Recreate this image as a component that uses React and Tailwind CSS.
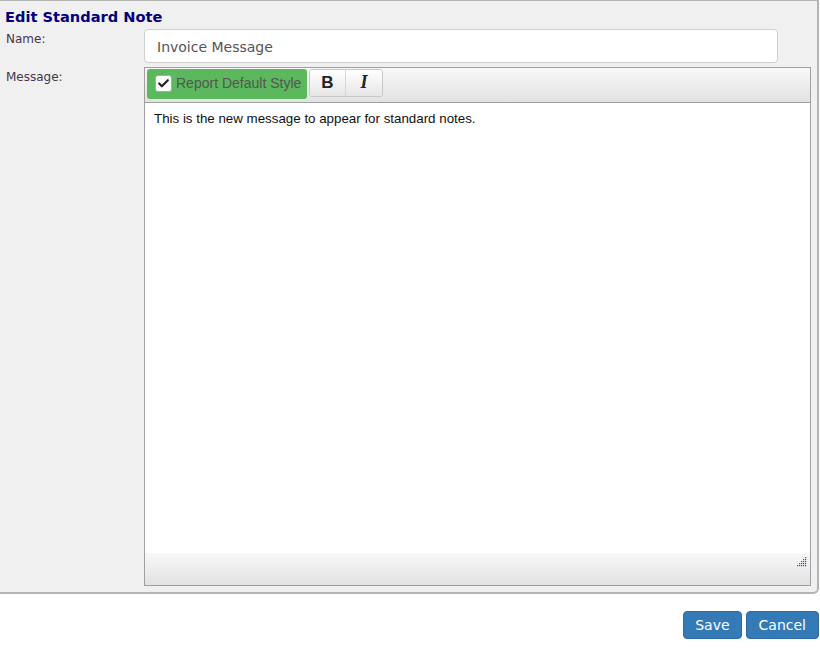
import { Check } from "lucide-react";

const verdana = "font-['DejaVu_Sans',Verdana,sans-serif]";
const arial = "font-['Liberation_Sans',Arial,sans-serif]";

function ToolbarButton({ children, className = "" }) {
  return (
    <button
      className={`h-[26px] w-[36px] flex items-center justify-center bg-gradient-to-b from-[#ffffff] to-[#e6e6e6] text-[#222] ${className}`}
    >
      {children}
    </button>
  );
}

export default function App() {
  return (
    <div className="w-[820px] h-[657px] bg-white">
      <div className="w-[819px] h-[594px] bg-[#f0f0f0] border-t border-r-2 border-b-2 border-[#b4b4b4] rounded-br-md flex flex-col">
        <h1 className={`${verdana} text-[14.6px] font-bold text-[#000080] leading-none pl-[5px] pt-[9px]`}>
          Edit Standard Note
        </h1>

        <div className="flex mt-[4px]">
          <label className={`${verdana} text-[12px] text-[#45364a] w-[144px] pl-[6px] pt-[1px]`}>
            Name:
          </label>
          <input
            defaultValue="Invoice Message"
            className={`${verdana} w-[634px] h-[34px] bg-white border border-[#cfcfcf] rounded-[4px] px-[12px] pt-[2px] text-[14px] text-[#555] outline-none`}
          />
        </div>

        <div className="flex mt-[4px]">
          <label className={`${verdana} text-[12px] text-[#45364a] w-[144px] pl-[6px] pt-[1px]`}>
            Message:
          </label>
          <div className="w-[667px] h-[519px] border border-[#a0a0a0] bg-white flex flex-col">
            <div className="h-[35px] border-b border-[#a0a0a0] bg-gradient-to-b from-[#f8f8f8] to-[#e2e2e2] flex items-start pt-[1px] pl-[2px] gap-[2px]">
              <button className={`${arial} h-[30px] w-[160px] bg-[#5cb85c] rounded-[3px] flex items-center gap-[4px] pl-[8px] text-[14px] text-[#555]`}>
                <span className="w-[17px] h-[17px] bg-white border border-[#aaa] rounded-[3px] flex items-center justify-center">
                  <Check size={13} strokeWidth={4} className="text-[#222]" />
                </span>
                Report Default Style
              </button>
              <div className="flex border border-[#c8c8c8] rounded-[3px] overflow-hidden">
                <ToolbarButton className="border-r border-[#d8d8d8]">
                  <span className={`${arial} text-[17px] font-bold`}>B</span>
                </ToolbarButton>
                <ToolbarButton>
                  <span className="font-['Liberation_Serif',serif] text-[18px] italic font-bold">I</span>
                </ToolbarButton>
              </div>
            </div>
            <div className={`${arial} flex-1 px-[9px] pt-[6px] text-[13.33px] text-[#111]`}>
              This is the new message to appear for standard notes.
            </div>
            <div className="h-[32px] bg-gradient-to-b from-[#f8f8f8] to-[#e2e2e2] flex justify-end items-start pt-[4px] pr-[3px]">
              <svg width="10" height="10" viewBox="0 0 10 10">
                {[0, 1, 2, 3, 4].map((r) =>
                  [0, 1, 2, 3, 4]
                    .filter((c) => c >= 4 - r)
                    .map((c) => (
                      <rect key={`${r}-${c}`} x={c * 2} y={r * 2} width="1.2" height="1.2" fill="#9b1fbf" />
                    ))
                )}
              </svg>
            </div>
          </div>
        </div>
      </div>

      <div className="flex justify-end gap-[4px] pr-[1px] pt-[17px]">
        <button className={`${verdana} h-[28px] px-[11px] bg-[#337ab7] border border-[#2e6da4] rounded-[4px] text-white text-[14px]`}>
          Save
        </button>
        <button className={`${verdana} h-[28px] px-[12px] bg-[#337ab7] border border-[#2e6da4] rounded-[4px] text-white text-[14px]`}>
          Cancel
        </button>
      </div>
    </div>
  );
}
